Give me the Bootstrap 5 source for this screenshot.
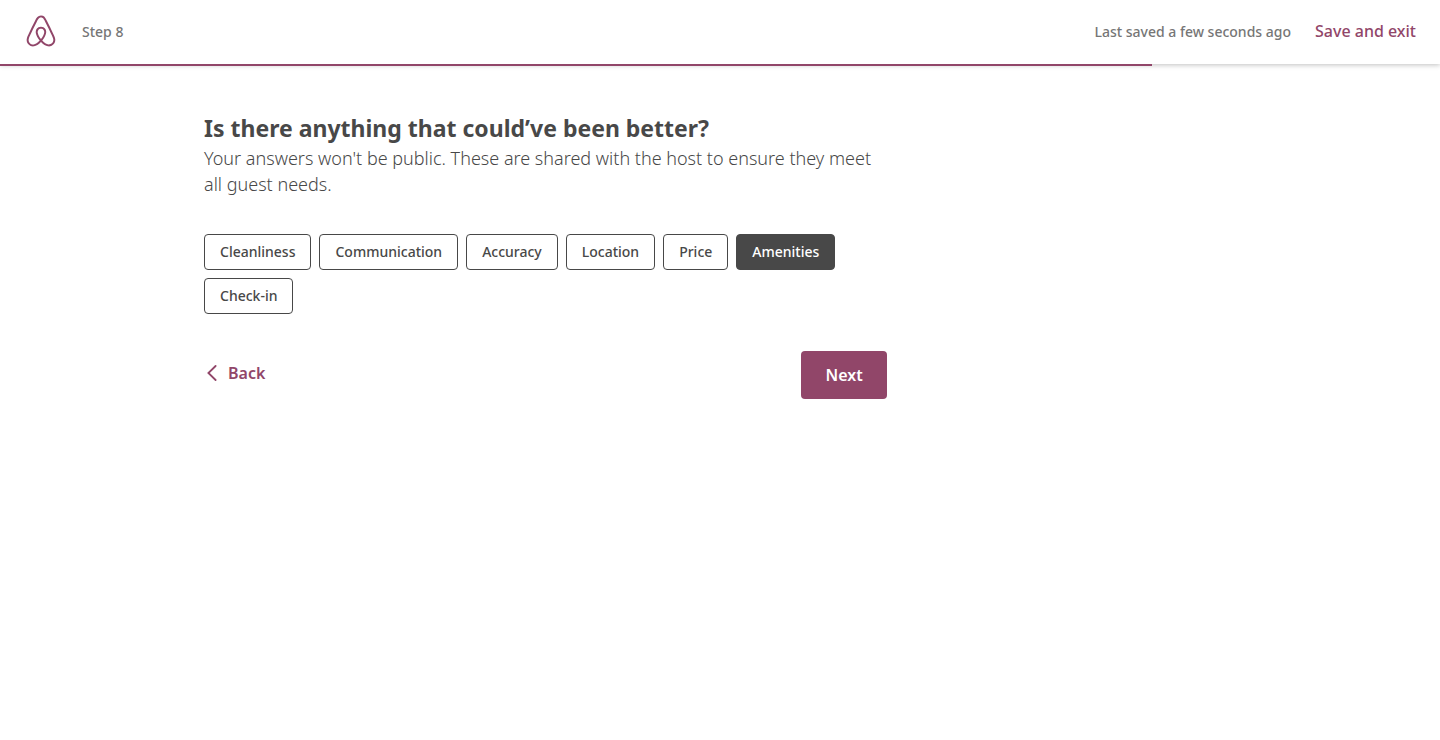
<!DOCTYPE html>
<html lang="en">
<head>
<meta charset="utf-8">
<meta name="viewport" content="width=device-width, initial-scale=1">
<title>Leave a review</title>
<link href="https://cdn.jsdelivr.net/npm/bootstrap@5.3.0/dist/css/bootstrap.min.css" rel="stylesheet">
<style>
  :root { --plum: #914669; --ink: #484848; --muted: #767676; }
  body { font-family: "Noto Sans", sans-serif; color: var(--ink); background: #fff; }
  .topbar { height: 64px; padding: 0 24px 2px; box-shadow: 0 1px 5px rgba(0,0,0,.25); }
  .steps { height: 2px; background: transparent; border-radius: 0; }
  .steps .progress-bar { background: var(--plum); }
  .note { font-size: 14px; font-weight: 500; color: var(--muted); }
  .plum-link { font-size: 16px; font-weight: 500; line-height: 24px; color: var(--plum); }
  .plum-link:hover { color: var(--plum); text-decoration: underline; }
  .page { max-width: 1080px; padding: 48px 24px; }
  h1 { font-size: 23px; line-height: 28px; font-weight: 700; }
  .intro { font-size: 18px; line-height: 26px; font-weight: 300; margin: 3px 0 0; }
  .choices, .actions { margin-top: 37px; }
  .choice { font-size: 14px; line-height: 18px; font-weight: 500; padding: 8px 15px; color: var(--ink); border: 1px solid var(--ink); border-radius: 4px; }
  .choice.active, .choice:hover { color: #fff; background: var(--ink); border-color: var(--ink); }
  .back { padding: 10px 0; font-weight: 600; }
  .next { font-size: 16px; line-height: 24px; font-weight: 600; padding: 12px 24px; color: #fff; background: var(--plum); border: 0; border-radius: 4px; }
  .next:hover { color: #fff; background: #7d3a59; }
</style>
</head>
<body>
<header>
  <nav class="topbar d-flex align-items-center" aria-label="Review">
    <a href="#" class="d-flex" aria-label="Home">
      <svg width="34" height="34" viewBox="0 0 1000 1000" fill="#914669" aria-hidden="true"><path d="m499.3 736.7c-51-64-81-120.1-91-168.1-10-39-6-70 11-93 18-27 45-40 80-40s62 13 80 40c17 23 21 54 11 93-11 49-41 105-91 168.1zm362.2 43c-7 47-39 86-83 105-85 37-169.1-22-241.1-102 119.1-149.1 141.1-265.1 90-340.2-30-43-73-64-128.1-64-111 0-172.1 94-148.1 203.1 14 59 51 126.1 110 201.1-37 41-72 70-103 88-24 13-47 21-69 23-101 15-180.1-83-144.1-184.1 5-13 15-37 32-74l1-2c55-120.1 122.1-256.1 199.1-407.2l2-5 22-42c17-31 24-45 51-62 13-8 29-12 47-12 36 0 64 21 76 38 6 9 13 21 22 36l21 41 3 6c77 151.1 144.1 287.1 199.1 407.2l1 1 20 46 12 29c9.2 23.1 11.2 46.1 8.2 70.1zm46-90.1c-7-22-19-48-34-79v-1c-71-151.1-137.1-287.1-200.1-409.2l-4-6c-45-92-77-147.1-170.1-147.1-92 0-131.1 64-171.1 147.1l-3 6c-63 122.1-129.1 258.1-200.1 409.2v2l-21 46c-8 19-12 29-13 32-51 140.1 54 263.1 181.1 263.1 1 0 5 0 10-1h14c66-8 134.1-50 203.1-125.1 69 75 137.1 117.1 203.1 125.1h14c5 1 9 1 10 1 127.1.1 232.1-123 181.1-263.1z"/></svg>
    </a>
    <span class="note ms-4">Step 8</span>
    <span class="note ms-auto">Last saved a few seconds ago</span>
    <a href="#" class="plum-link text-decoration-none ms-4">Save and exit</a>
  </nav>
  <div class="progress steps" role="progressbar" aria-label="Review progress" aria-valuenow="80" aria-valuemin="0" aria-valuemax="100">
    <div class="progress-bar" style="width: 80%"></div>
  </div>
</header>
<main class="page mx-auto">
  <div class="row gx-3">
    <div class="col-md-8">
      <h1 class="mb-0">Is there anything that could’ve been better?</h1>
      <p class="intro">Your answers won't be public. These are shared with the host to ensure they meet all guest needs.</p>
      <div class="d-flex flex-wrap gap-2 choices" role="group" aria-label="Areas to improve">
        <button type="button" class="btn choice">Cleanliness</button>
        <button type="button" class="btn choice">Communication</button>
        <button type="button" class="btn choice">Accuracy</button>
        <button type="button" class="btn choice">Location</button>
        <button type="button" class="btn choice">Price</button>
        <button type="button" class="btn choice active" aria-pressed="true">Amenities</button>
        <button type="button" class="btn choice">Check-in</button>
      </div>
      <div class="d-flex justify-content-between align-items-start actions">
        <button type="button" class="btn plum-link back border-0 d-flex align-items-center gap-2">
          <svg width="16" height="16" viewBox="0 0 16 16" fill="none" stroke="currentColor" stroke-width="1.8" stroke-linecap="round" aria-hidden="true"><path d="M11.6 1 4.4 8l7.2 7"/></svg>Back
        </button>
        <button type="button" class="btn next">Next</button>
      </div>
    </div>
  </div>
</main>
<script src="https://cdn.jsdelivr.net/npm/bootstrap@5.3.0/dist/js/bootstrap.bundle.min.js"></script>
</body>
</html>
